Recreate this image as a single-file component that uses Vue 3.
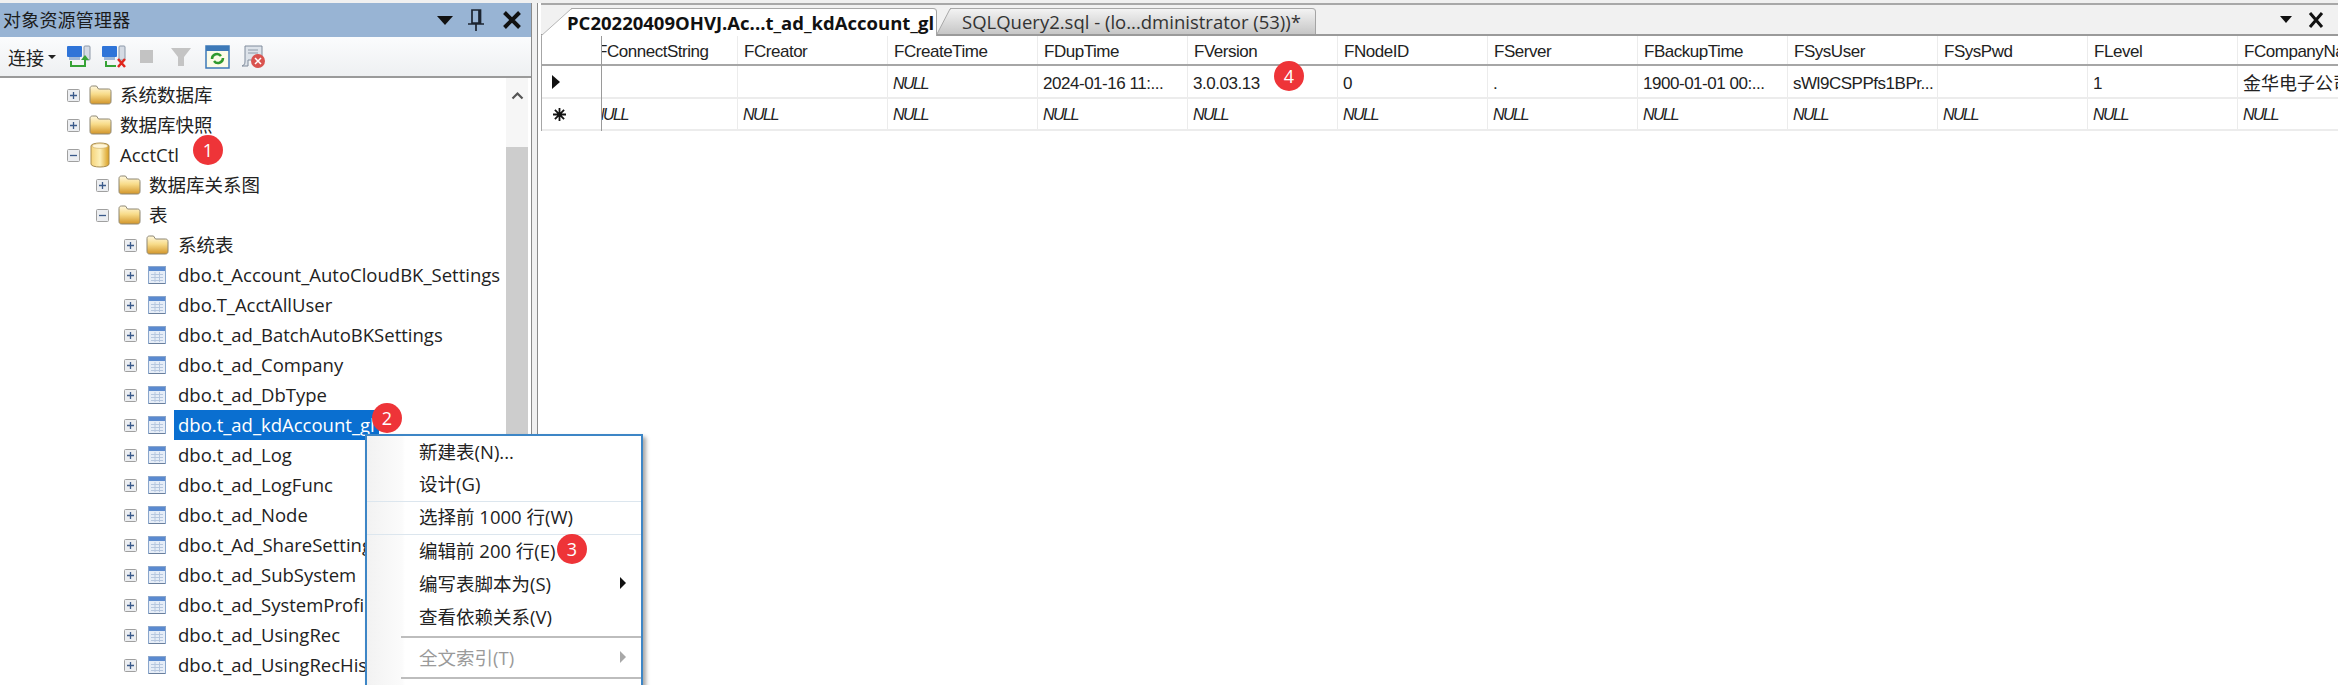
<script setup>
const rows = [
  { level: 1, open: false, icon: 'folder', text: '系统数据库' },
  { level: 1, open: false, icon: 'folder', text: '数据库快照' },
  { level: 1, open: true, icon: 'db', text: 'AcctCtl' },
  { level: 2, open: false, icon: 'folder', text: '数据库关系图' },
  { level: 2, open: true, icon: 'folder', text: '表' },
  { level: 3, open: false, icon: 'folder', text: '系统表' },
  { level: 3, open: false, icon: 'table', text: 'dbo.t_Account_AutoCloudBK_Settings' },
  { level: 3, open: false, icon: 'table', text: 'dbo.T_AcctAllUser' },
  { level: 3, open: false, icon: 'table', text: 'dbo.t_ad_BatchAutoBKSettings' },
  { level: 3, open: false, icon: 'table', text: 'dbo.t_ad_Company' },
  { level: 3, open: false, icon: 'table', text: 'dbo.t_ad_DbType' },
  { level: 3, open: false, icon: 'table', text: 'dbo.t_ad_kdAccount_gl', selected: true },
  { level: 3, open: false, icon: 'table', text: 'dbo.t_ad_Log' },
  { level: 3, open: false, icon: 'table', text: 'dbo.t_ad_LogFunc' },
  { level: 3, open: false, icon: 'table', text: 'dbo.t_ad_Node' },
  { level: 3, open: false, icon: 'table', text: 'dbo.t_Ad_ShareSettings' },
  { level: 3, open: false, icon: 'table', text: 'dbo.t_ad_SubSystem' },
  { level: 3, open: false, icon: 'table', text: 'dbo.t_ad_SystemProfile' },
  { level: 3, open: false, icon: 'table', text: 'dbo.t_ad_UsingRec' },
  { level: 3, open: false, icon: 'table', text: 'dbo.t_ad_UsingRecHistory' },
]
const columns = ['FConnectString', 'FCreator', 'FCreateTime', 'FDupTime', 'FVersion', 'FNodeID', 'FServer', 'FBackupTime', 'FSysUser', 'FSysPwd', 'FLevel', 'FCompanyName']
const dataRow = ['', '', null, '2024-01-16 11:...', '3.0.03.13', '0', '.', '1900-01-01 00:...', 'sWl9CSPPfs1BPr...', '', '1', '金华电子公司']
const menu = [
  { text: '新建表(N)...' },
  { text: '设计(G)', sep: 'light' },
  { text: '选择前 1000 行(W)', sep: 'light' },
  { text: '编辑前 200 行(E)' },
  { text: '编写表脚本为(S)', arrow: true },
  { text: '查看依赖关系(V)', sep: 'grey' },
  { text: '全文索引(T)', arrow: true, disabled: true, sep: 'grey' },
]
</script>

<template>
  <div class="app">
    <section class="explorer">
      <header class="title">
        <span class="title-text">对象资源管理器</span>
        <span class="caret-down"></span>
        <svg class="pin" width="16" height="24" viewBox="0 0 16 24"><path d="M4 2h8.500v13H4zM0 16h16M8 16v7M11 2v13" fill="none" stroke="#1c2430" stroke-width="1.700"/></svg>
        <svg class="close" width="20" height="20" viewBox="0 0 20 20"><path d="M2.500 2.500l15 15M17.500 2.500l-15 15" stroke="#111" stroke-width="4"/></svg>
      </header>
      <div class="toolbar">
        <span class="connect">连接</span>
        <span class="caret-small"></span>
        <svg class="tool first" width="26" height="24" viewBox="0 0 26 24"><rect x="1" y="1" width="15" height="11" rx="1" fill="#2f74d8"/><rect x="3" y="12" width="11" height="3" fill="#9fb8d8"/><rect x="18" y="1" width="6" height="14" rx="1" fill="#d5dbe4" stroke="#8c98a8"/><path d="M5 16v5h14v-6" fill="none" stroke="#36a336" stroke-width="2"/><path d="M15 15h8l-4-5z" fill="#36a336"/></svg>
        <svg class="tool second" width="26" height="24" viewBox="0 0 26 24"><rect x="1" y="1" width="15" height="11" rx="1" fill="#2f74d8"/><rect x="3" y="12" width="11" height="3" fill="#9fb8d8"/><rect x="18" y="1" width="6" height="14" rx="1" fill="#d5dbe4" stroke="#8c98a8"/><path d="M5 16v5h10" fill="none" stroke="#36a336" stroke-width="2"/><path d="M17 14l7 8M24 14l-7 8" stroke="#e0261c" stroke-width="2.500"/></svg>
        <span class="stop"></span>
        <svg class="funnel" width="22" height="22" viewBox="0 0 22 22"><path d="M1 2h20l-7 9v9h-6v-9z" fill="#c4c4c4"/></svg>
        <svg class="refresh" width="25" height="24" viewBox="0 0 25 24"><rect x="1" y="1" width="23" height="22" fill="#fbfbe8" stroke="#3d79b8" stroke-width="1.500"/><rect x="1" y="1" width="23" height="5" fill="#3d79b8"/><path d="M7 14a5 5 0 0 1 9-3M18 13a5 5 0 0 1-9 3" fill="none" stroke="#2f9a2f" stroke-width="2.500"/></svg>
        <svg class="script" width="25" height="24" viewBox="0 0 25 24"><path d="M4 1h17v14H7v6H1c3-1 3-3 3-6z" fill="#dde3ea" stroke="#808c9c"/><path d="M7 5h10M7 8h10" stroke="#8f9aa8"/><circle cx="17" cy="16" r="7" fill="#d9534f"/><path d="M14 13l6 6M20 13l-6 6" stroke="#fff" stroke-width="1.500"/></svg>
      </div>
      <div class="tree-area">
        <ul class="tree">
          <li v-for="row in rows" :key="row.text" class="node" :class="'level-' + row.level">
            <span class="expander">
              <svg width="13" height="13" viewBox="0 0 13 13"><rect x=".5" y=".5" width="12" height="12" rx="1" fill="#eceef1" stroke="#a0a0a0"/><path :d="row.open ? 'M3 6.500h7' : 'M3 6.500h7M6.500 3v7'" stroke="#3a5a8a" stroke-width="1.300"/></svg>
            </span>
            <span class="icon-slot">
              <svg v-if="row.icon === 'folder'" width="23" height="20" viewBox="0 0 23 20"><defs><linearGradient id="fg" x1="0" y1="0" x2="0" y2="1"><stop offset="0" stop-color="#fff8df"/><stop offset=".45" stop-color="#f8dc8a"/><stop offset="1" stop-color="#d2952a"/></linearGradient></defs><path d="M1 3.500C1 2 2 1 3.500 1h4l2 3h10C21 4 22 5 22 6.500v10c0 1.500-1 2.500-2.500 2.500h-16C2 19 1 18 1 16.500z" fill="url(#fg)" stroke="#8d8673"/></svg>
              <svg v-else-if="row.icon === 'db'" width="20" height="26" viewBox="0 0 20 26"><defs><linearGradient id="dg" x1="0" y1="0" x2="1" y2="0"><stop offset="0" stop-color="#f5d277"/><stop offset=".5" stop-color="#fdf0b8"/><stop offset="1" stop-color="#d99e20"/></linearGradient></defs><path d="M1 4c0-4 18-4 18 0v18c0 4-18 4-18 0z" fill="url(#dg)" stroke="#a88c50"/><ellipse cx="10" cy="4" rx="8" ry="2.400" fill="#fff6d8" stroke="#c9a860" stroke-width=".6"/></svg>
              <svg v-else width="18" height="18" viewBox="0 0 18 18"><rect x=".5" y=".5" width="17" height="17" fill="#e6edf7" stroke="#8aa6cc"/><rect x="1" y="1" width="16" height="4" fill="#5a8ad0"/><path d="M3 8.500h12M3 11.500h12M3 14.500h12M7 6v10M11.500 6v10" stroke="#b6c7df"/><path d="M1 17.500h16" stroke="#6a7f9c"/></svg>
            </span>
            <span class="node-text" :class="{ selected: row.selected }">{{ row.text }}</span>
          </li>
        </ul>
        <div class="scrollbar">
          <div class="scroll-btn">
            <svg width="13" height="9" viewBox="0 0 13 9"><path d="M1.500 7.500l5-5 5 5" fill="none" stroke="#555" stroke-width="2.200"/></svg>
          </div>
          <div class="thumb"></div>
        </div>
      </div>
    </section>

    <section class="results">
      <div class="tabs">
        <div class="tab active">
          <svg class="slant big" width="31" height="28" viewBox="0 0 31 28"><path d="M0 28L30 1h1v27z" fill="#fff"/><path d="M0 28L30 1h1" fill="none" stroke="#b5b5b5"/></svg>
          <span class="tab-label">PC20220409OHVJ.Ac...t_ad_kdAccount_gl</span>
        </div>
        <div class="tab">
          <svg class="slant small" width="14" height="26" viewBox="0 0 14 26"><defs><linearGradient id="tg" x1="0" y1="0" x2="0" y2="1"><stop offset="0" stop-color="#f3f3f3"/><stop offset="1" stop-color="#c6c6c6"/></linearGradient></defs><path d="M0 26L13 1h1v25z" fill="url(#tg)"/><path d="M0 26L13 1h1" fill="none" stroke="#a8a8a8"/></svg>
          <span>SQLQuery2.sql - (lo...dministrator (53))*</span>
        </div>
        <span class="tab-fill"></span>
        <span class="tab-caret"></span>
        <svg class="tab-close" width="18" height="18" viewBox="0 0 18 18"><path d="M3 2l12 14M15 2L3 16" stroke="#111" stroke-width="3"/></svg>
      </div>
      <div class="grid">
        <div class="row-headers">
          <div class="rh head"></div>
          <div class="rh one"><span class="marker"></span></div>
          <div class="rh two">
            <svg width="15" height="15" viewBox="0 0 15 15"><path d="M7.500 1v13M1 7.500h13M2.900 2.900l9.200 9.200M12.100 2.900l-9.200 9.200" stroke="#111" stroke-width="1.800"/></svg>
          </div>
        </div>
        <div class="grid-body">
          <div class="grid-inner">
            <div class="line head">
              <div v-for="c in columns" :key="c" class="cell">{{ c }}</div>
            </div>
            <div class="line one">
              <div v-for="(v, i) in dataRow" :key="i" class="cell" :class="{ nullv: v === null, zh: i === 11 }">{{ v === null ? 'NULL' : v }}</div>
            </div>
            <div class="line two">
              <div v-for="c in columns" :key="c" class="cell nullv">NULL</div>
            </div>
          </div>
        </div>
      </div>
    </section>

    <div class="menu">
      <div v-for="m in menu" :key="m.text" class="menu-item" :class="[m.sep ? 'sep-' + m.sep : '', { disabled: m.disabled }]">
        <span class="menu-text">{{ m.text }}</span>
        <span v-if="m.arrow" class="menu-arrow"></span>
      </div>
    </div>

    <span class="badge b1">1</span>
    <span class="badge b2">2</span>
    <span class="badge b3">3</span>
    <span class="badge b4">4</span>
  </div>
</template>

<style scoped>
.app {
  position: relative;
  display: flex;
  width: 2338px;
  height: 685px;
  padding-top: 3px;
  box-sizing: border-box;
  overflow: hidden;
  background: #f0f0f0;
  font-family: "Open Sans", "Noto Sans CJK SC", sans-serif;
  color: #222;
}
.explorer {
  width: 531px;
  flex: none;
  display: flex;
  flex-direction: column;
  border-right: 1px solid #8a8a8a;
  background: #fff;
}
.title {
  height: 34px;
  flex: none;
  display: flex;
  align-items: center;
  background: #98b4d4;
  padding-left: 3px;
}
.title-text { font-size: 18px; color: #1c1c1c; letter-spacing: .2px; margin-top: -2px; }
.caret-down {
  margin-left: auto;
  width: 0;
  height: 0;
  border-left: 8px solid transparent;
  border-right: 8px solid transparent;
  border-top: 9px solid #111;
}
.pin { margin-left: 15px; }
.close { margin: 0 9px 0 18px; }
.toolbar {
  height: 41px;
  flex: none;
  display: flex;
  align-items: center;
  box-sizing: border-box;
  padding-left: 8px;
  background: linear-gradient(#fbfcfd, #eef0f2);
  border-bottom: 2px solid #9a9a9a;
}
.connect { font-size: 18px; color: #222; }
.caret-small {
  margin-left: 4px;
  width: 0;
  height: 0;
  border-left: 4px solid transparent;
  border-right: 4px solid transparent;
  border-top: 4px solid #222;
}
.tool.first { margin-left: 10px; }
.tool.second { margin-left: 9px; }
.stop { width: 13px; height: 13px; margin-left: 13px; background: #c3c3c3; }
.funnel { margin-left: 17px; }
.refresh { margin-left: 13px; }
.script { margin-left: 11px; }
.tree-area { flex: 1; display: flex; min-height: 0; padding-right: 3px; }
.tree {
  flex: 1;
  min-width: 0;
  list-style: none;
  margin: 0;
  padding: 2px 0 0;
  overflow: hidden;
}
.node {
  display: flex;
  align-items: center;
  height: 30px;
  white-space: nowrap;
  font-size: 18.5px;
}
.level-1 { padding-left: 67px; }
.level-2 { padding-left: 96px; }
.level-3 { padding-left: 124px; }
.expander { width: 13px; height: 13px; flex: none; display: flex; }
.icon-slot { width: 24px; margin-left: 8px; flex: none; display: flex; justify-content: center; }
.node-text { margin-left: 5px; padding: 0 4px; line-height: 30px; height: 30px; }
.level-1 .node-text, .level-2 .node-text { margin-left: 4px; }
.node-text.selected { background: #0a6fd0; color: #fff; }
.scrollbar {
  width: 22px;
  flex: none;
  display: flex;
  flex-direction: column;
  background: #fff;
}
.scroll-btn {
  height: 69px;
  flex: none;
  background: #f6f6f6;
  display: flex;
  justify-content: center;
  padding-top: 13px;
  box-sizing: border-box;
}
.thumb { flex: 1; background: #cdcdcd; }
.results {
  flex: 1;
  min-width: 0;
  margin-left: 5px;
  display: flex;
  flex-direction: column;
  background: #fff;
  border-left: 1px solid #8a8a8a;
}
.tabs {
  height: 33px;
  flex: none;
  display: flex;
  align-items: flex-end;
  box-sizing: border-box;
  margin-left: 3px;
  background: #f1f1f1;
  border-top: 2px solid #a8a8a8;
  border-bottom: 2px solid #9a9a9a;
}
.tab {
  position: relative;
  height: 26px;
  box-sizing: border-box;
  display: flex;
  align-items: center;
  font-size: 18.5px;
  white-space: nowrap;
  background: linear-gradient(#f3f3f3, #c6c6c6);
  border-top: 1px solid #a8a8a8;
  border-right: 1px solid #a4a4a4;
  border-radius: 0 4px 0 0;
  margin-left: 13px;
  padding-left: 12px;
  width: 366px;
  color: #333;
}
.tab.active {
  width: 366px;
  margin-left: 30px;
  background: #fff;
  color: #111;
  font-weight: 700;
  height: 28px;
  margin-bottom: -2px;
  padding-left: 0;
  z-index: 1;
}
.tab-label { position: relative; margin-left: -4px; }
.slant { position: absolute; bottom: 0; }
.slant.big { left: -30px; }
.slant.small { left: -13px; }
.tab-fill { flex: 1; }
.tab-caret {
  align-self: center;
  width: 0;
  height: 0;
  border-left: 6px solid transparent;
  border-right: 6px solid transparent;
  border-top: 7px solid #111;
}
.tab-close { align-self: center; margin: 0 13px 0 15px; }
.grid { display: flex; margin-left: 3px; font-family: "Liberation Sans", "Noto Sans CJK SC", sans-serif; font-size: 17px; letter-spacing: -.47px; color: #222; }
.row-headers {
  width: 61px;
  flex: none;
  box-sizing: border-box;
  border-left: 1px solid #a6a6a6;
  border-right: 1px solid #9a9a9a;
}
.rh { box-sizing: border-box; display: flex; align-items: center; padding-left: 10px; }
.rh.head, .line.head { height: 30px; border-bottom: 2px solid #a6a6a6; box-sizing: border-box; }
.rh.one, .line.one { height: 33px; border-bottom: 2px solid #ececec; box-sizing: border-box; }
.rh.two, .line.two { height: 32px; border-bottom: 2px solid #ececec; box-sizing: border-box; }
.marker {
  width: 0;
  height: 0;
  border-top: 7px solid transparent;
  border-bottom: 7px solid transparent;
  border-left: 8px solid #111;
}
.grid-body { flex: 1; min-width: 0; overflow: hidden; }
.grid-inner { margin-left: -14px; }
.line { display: grid; grid-template-columns: repeat(12, 150px); }
.cell {
  box-sizing: border-box;
  padding-left: 5px;
  white-space: nowrap;
  overflow: hidden;
  border-right: 1px solid #ececec;
}
.line.one .cell { padding-top: 5px; line-height: 26px; }
.line.two .cell { padding-top: 2px; line-height: 28px; }
.line.head .cell { padding-left: 6px; line-height: 31px; }
.line.head .cell:first-child { padding-left: 9px; }
.cell.nullv { font-style: italic; font-size: 16px; letter-spacing: -1.5px; }
.zh { font-size: 18px; letter-spacing: 0; }
.menu {
  position: absolute;
  left: 365px;
  top: 434px;
  width: 278px;
  height: 270px;
  box-sizing: border-box;
  border: 2px solid #3d86c6;
  background: linear-gradient(90deg, #f2f2f2, #fbfbfb 35px, #fff 38px);
  box-shadow: 3px 3px 4px rgba(0, 0, 0, .35);
}
.menu-item {
  position: relative;
  height: 33px;
  box-sizing: border-box;
  padding-bottom: 4px;
  display: flex;
  align-items: center;
  padding-left: 52px;
  font-size: 18.5px;
  color: #222;
  white-space: nowrap;
}
.menu-item.disabled { color: #9a9a9a; }
.sep-light { border-bottom: 1px solid #dce6ee; }
.sep-grey { margin-bottom: 8px; }
.sep-grey::after {
  content: "";
  position: absolute;
  left: 34px;
  right: 0;
  bottom: -4px;
  border-top: 2px solid #bdbdbd;
}
.menu-arrow {
  position: absolute;
  left: 253px;
  width: 0;
  height: 0;
  border-top: 6px solid transparent;
  border-bottom: 6px solid transparent;
  border-left: 6px solid #111;
}
.disabled .menu-arrow { border-left-color: #a8a8a8; }
.badge {
  position: absolute;
  width: 30px;
  height: 30px;
  border-radius: 50%;
  background: #ee3438;
  color: #fff;
  font-size: 18px;
  line-height: 30px;
  text-align: center;
}
.b1 { left: 193px; top: 135px; }
.b2 { left: 372px; top: 403px; }
.b3 { left: 557px; top: 534px; }
.b4 { left: 1274px; top: 61px; }
</style>
